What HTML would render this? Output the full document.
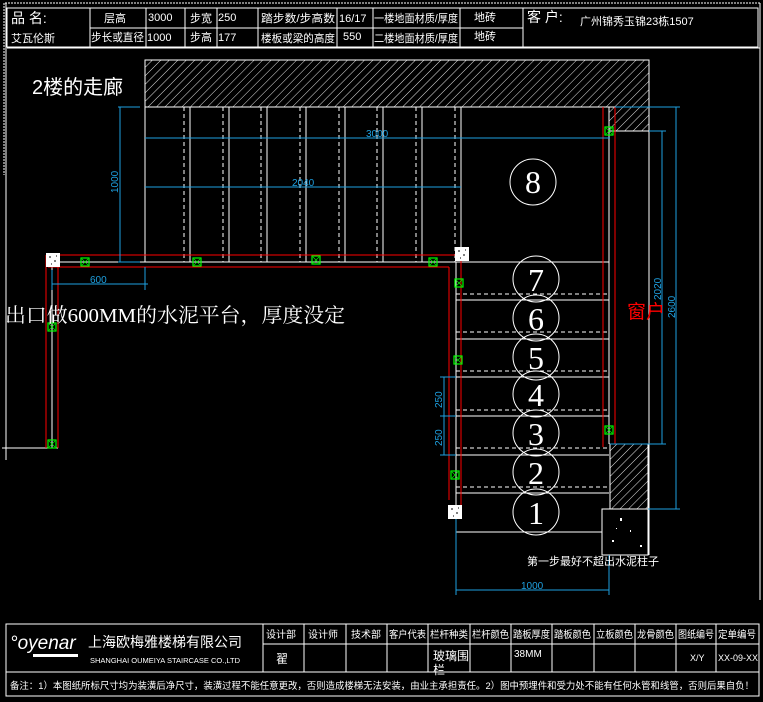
<!DOCTYPE html>
<html><head><meta charset="utf-8"><style>
html,body{margin:0;padding:0;background:#000;}
svg{display:block;}
text{font-family:"Liberation Sans","Noto Sans CJK SC",sans-serif;}
.s{font-family:"Liberation Serif","Noto Serif CJK SC",serif;}
</style></head><body>
<svg width="763" height="702" viewBox="0 0 763 702" xmlns="http://www.w3.org/2000/svg">
<defs>
<pattern id="h" width="6" height="6" patternUnits="userSpaceOnUse" patternTransform="rotate(45)">
<line x1="0" y1="0" x2="0" y2="6" stroke="#fff" stroke-width="0.9"/>
</pattern>
<g id="g"><rect x="-4" y="-4" width="8" height="8" fill="none" stroke="#0f0" stroke-width="1.2"/><path d="M-3 -3L3 3M3 -3L-3 3" stroke="#0f0" stroke-width="0.7"/></g>
<g id="w"><rect x="-7" y="-7" width="14" height="14" fill="#fff"/><path d="M-4 -3h2M1 1h2M-2 4h1M3 -4h1" stroke="#000" stroke-width="1"/></g>
</defs>
<rect width="763" height="702" fill="#000"/>
<line x1="5" y1="3" x2="760" y2="3" stroke="#fff" stroke-dasharray="2 1"/>
<line x1="6" y1="3" x2="6" y2="460" stroke="#fff"/>
<line x1="4" y1="3" x2="4" y2="175" stroke="#fff" stroke-dasharray="2 1"/>
<line x1="760" y1="3" x2="760" y2="600" stroke="#fff"/>
<g stroke="#fff" stroke-width="1" fill="none">
<rect x="7" y="8" width="751" height="39"/>
<line x1="7" y1="48" x2="760" y2="48"/>
<line x1="90" y1="28" x2="523" y2="28"/>
<line x1="90" y1="8" x2="90" y2="47"/><line x1="146" y1="8" x2="146" y2="47"/>
<line x1="185" y1="8" x2="185" y2="47"/><line x1="217" y1="8" x2="217" y2="47"/>
<line x1="258" y1="8" x2="258" y2="47"/><line x1="337" y1="8" x2="337" y2="47"/>
<line x1="373" y1="8" x2="373" y2="47"/><line x1="460" y1="8" x2="460" y2="47"/>
<line x1="523" y1="8" x2="523" y2="47"/>
</g>
<g fill="#fff" font-size="11">
<text x="11" y="23" font-size="14">品 名:</text>
<text x="11" y="42">艾瓦伦斯</text>
<text x="104" y="22">层高</text><text x="148" y="21">3000</text>
<text x="190" y="22">步宽</text><text x="218" y="21">250</text>
<text x="261" y="22" textLength="74" lengthAdjust="spacingAndGlyphs">踏步数/步高数</text><text x="339" y="22">16/17</text>
<text x="374" y="22" textLength="84" lengthAdjust="spacingAndGlyphs">一楼地面材质/厚度</text><text x="474" y="21">地砖</text>
<text x="91" y="41" textLength="53" lengthAdjust="spacingAndGlyphs">步长或直径</text><text x="147" y="41">1000</text>
<text x="190" y="41">步高</text><text x="218" y="41">177</text>
<text x="261" y="42" textLength="74" lengthAdjust="spacingAndGlyphs">楼板或梁的高度</text><text x="343" y="40">550</text>
<text x="374" y="42" textLength="84" lengthAdjust="spacingAndGlyphs">二楼地面材质/厚度</text><text x="474" y="40">地砖</text>
<text x="527" y="22" font-size="14">客 户:</text>
<text x="580" y="25">广州锦秀玉锦23栋1507</text>
</g>
<rect x="145" y="60" width="504" height="47" fill="url(#h)" stroke="#fff"/>
<rect x="609" y="107" width="40" height="24" fill="url(#h)" stroke="#fff"/>
<rect x="610" y="444" width="38" height="65" fill="url(#h)" stroke="#fff"/>
<rect x="602" y="509" width="46" height="46" fill="#000" stroke="#fff"/>
<g fill="#fff"><rect x="620" y="518" width="2" height="3"/><rect x="612" y="540" width="2" height="2"/><rect x="630" y="530" width="1" height="2"/><rect x="640" y="545" width="2" height="2"/><rect x="616" y="528" width="1" height="1"/></g>
<text x="32" y="94" fill="#fff" font-size="20">2楼的走廊</text>
<g stroke="#fff" fill="none">
<line x1="145" y1="107" x2="145" y2="262"/>
<line x1="649" y1="60" x2="649" y2="555"/>
<line x1="609" y1="107" x2="609" y2="444"/>
<line x1="48" y1="262" x2="609" y2="262"/>
<line x1="190" y1="107" x2="190" y2="262"/><line x1="229" y1="107" x2="229" y2="262"/>
<line x1="267" y1="107" x2="267" y2="262"/><line x1="306" y1="107" x2="306" y2="262"/>
<line x1="345" y1="107" x2="345" y2="262"/><line x1="383" y1="107" x2="383" y2="262"/>
<line x1="422" y1="107" x2="422" y2="262"/><line x1="461" y1="107" x2="461" y2="262"/>
<g stroke-dasharray="4 3">
<line x1="184" y1="107" x2="184" y2="262"/><line x1="223" y1="107" x2="223" y2="262"/>
<line x1="261" y1="107" x2="261" y2="262"/><line x1="300" y1="107" x2="300" y2="262"/>
<line x1="339" y1="107" x2="339" y2="262"/><line x1="377" y1="107" x2="377" y2="262"/>
<line x1="416" y1="107" x2="416" y2="262"/><line x1="455" y1="107" x2="455" y2="262"/>
</g>
<line x1="456" y1="262" x2="456" y2="590"/>
<line x1="456" y1="300" x2="609" y2="300"/><line x1="456" y1="339" x2="609" y2="339"/>
<line x1="456" y1="377" x2="609" y2="377"/><line x1="456" y1="416" x2="609" y2="416"/>
<line x1="456" y1="455" x2="609" y2="455"/><line x1="456" y1="493" x2="609" y2="493"/>
<line x1="456" y1="532" x2="602" y2="532"/>
<g stroke-dasharray="4 3">
<line x1="456" y1="294" x2="609" y2="294"/><line x1="456" y1="332" x2="609" y2="332"/>
<line x1="456" y1="371" x2="609" y2="371"/><line x1="456" y1="410" x2="609" y2="410"/>
<line x1="456" y1="448" x2="609" y2="448"/><line x1="456" y1="487" x2="609" y2="487"/>
</g>
<line x1="52" y1="262" x2="52" y2="448"/>
<line x1="2" y1="448" x2="58" y2="448"/>
</g>
<g stroke="#f00" fill="none">
<line x1="48" y1="255" x2="455" y2="255"/><line x1="48" y1="267" x2="449" y2="267"/>
<line x1="46" y1="255" x2="46" y2="448"/><line x1="58" y1="267" x2="58" y2="448"/>
<line x1="449" y1="267" x2="449" y2="500"/><line x1="461" y1="255" x2="461" y2="505"/>
<line x1="603" y1="107" x2="603" y2="447"/><line x1="615" y1="107" x2="615" y2="444"/>
</g>
<g fill="none" stroke="#fff">
<circle cx="533" cy="182" r="23"/>
<circle cx="536" cy="279" r="23"/><circle cx="536" cy="318" r="23"/><circle cx="536" cy="357" r="23"/>
<circle cx="536" cy="394" r="23"/><circle cx="536" cy="433" r="23"/><circle cx="536" cy="472" r="23"/><circle cx="536" cy="512" r="23"/>
</g>
<g fill="#fff" font-size="32" text-anchor="middle">
<text class="s" x="533" y="193">8</text>
<text class="s" x="536" y="291">7</text><text class="s" x="536" y="330">6</text><text class="s" x="536" y="369">5</text>
<text class="s" x="536" y="406">4</text><text class="s" x="536" y="445">3</text><text class="s" x="536" y="484">2</text><text class="s" x="536" y="524">1</text>
</g>
<g stroke="#1ea0e0" fill="none">
<line x1="120" y1="107" x2="120" y2="262"/><line x1="118" y1="107" x2="140" y2="107"/><line x1="118" y1="262" x2="140" y2="262"/>
<line x1="145" y1="138" x2="610" y2="138"/>
<line x1="145" y1="187" x2="461" y2="187"/>
<line x1="52" y1="284" x2="148" y2="284"/><line x1="52" y1="270" x2="52" y2="290"/><line x1="145" y1="267" x2="145" y2="290"/>
<line x1="615" y1="107" x2="680" y2="107"/><line x1="649" y1="131" x2="666" y2="131"/>
<line x1="662" y1="131" x2="662" y2="444"/><line x1="676" y1="107" x2="676" y2="509"/>
<line x1="610" y1="444" x2="666" y2="444"/><line x1="648" y1="509" x2="680" y2="509"/>
<line x1="456" y1="590" x2="609" y2="590"/><line x1="456" y1="510" x2="456" y2="595"/><line x1="609" y1="555" x2="609" y2="595"/>
<line x1="444" y1="377" x2="444" y2="455"/><line x1="440" y1="377" x2="456" y2="377"/><line x1="440" y1="416" x2="456" y2="416"/><line x1="440" y1="455" x2="456" y2="455"/>
</g>
<g fill="#1ea0e0" font-size="10">
<text x="366" y="137">3000</text>
<text x="292" y="186">2040</text>
<text x="90" y="283">600</text>
<text x="521" y="589">1000</text>
<text transform="translate(118,193) rotate(-90)">1000</text>
<text transform="translate(661,300) rotate(-90)">2020</text>
<text transform="translate(675,318) rotate(-90)">2600</text>
<text transform="translate(442,408) rotate(-90)">250</text>
<text transform="translate(442,446) rotate(-90)">250</text>
</g>
<use href="#g" x="85" y="262"/><use href="#g" x="197" y="262"/><use href="#g" x="316" y="260"/><use href="#g" x="433" y="262"/>
<use href="#g" x="609" y="131"/><use href="#g" x="459" y="283"/><use href="#g" x="458" y="360"/><use href="#g" x="609" y="430"/><use href="#g" x="455" y="475"/>
<use href="#g" x="52" y="327"/><use href="#g" x="52" y="444"/>
<use href="#w" x="53" y="260"/><use href="#w" x="462" y="254"/><use href="#w" x="455" y="512"/>
<text x="5" y="322" fill="#fff" font-size="20" class="s" textLength="340" lengthAdjust="spacingAndGlyphs">出口做600MM的水泥平台，厚度没定</text>
<text x="627" y="318" fill="#f00" font-size="19">窗户</text>
<text x="527" y="565" fill="#fff" font-size="11">第一步最好不超出水泥柱子</text>
<g stroke="#fff" fill="none">
<rect x="6" y="624" width="753" height="72"/>
<line x1="6" y1="672" x2="759" y2="672"/>
<line x1="263" y1="644" x2="759" y2="644"/>
<line x1="263" y1="624" x2="263" y2="672"/><line x1="304" y1="624" x2="304" y2="672"/>
<line x1="346" y1="624" x2="346" y2="672"/><line x1="387" y1="624" x2="387" y2="672"/>
<line x1="428" y1="624" x2="428" y2="672"/><line x1="470" y1="624" x2="470" y2="672"/>
<line x1="511" y1="624" x2="511" y2="672"/><line x1="552" y1="624" x2="552" y2="672"/>
<line x1="594" y1="624" x2="594" y2="672"/><line x1="635" y1="624" x2="635" y2="672"/>
<line x1="676" y1="624" x2="676" y2="672"/><line x1="716" y1="624" x2="716" y2="672"/>
</g>
<text x="10" y="649" fill="#fff" font-size="19" font-style="italic" font-family="Liberation Sans">°oyenar</text>
<rect x="33" y="654" width="45" height="3" fill="#fff"/>
<text x="88" y="647" fill="#fff" font-size="14">上海欧梅雅楼梯有限公司</text>
<text x="90" y="663" fill="#fff" font-size="7.5" font-family="Liberation Mono">SHANGHAI OUMEIYA STAIRCASE CO.,LTD</text>
<g fill="#fff" font-size="10">
<text x="266" y="638">设计部</text><text x="308" y="638">设计师</text><text x="351" y="638">技术部</text>
<text x="389" y="638" textLength="37" lengthAdjust="spacingAndGlyphs">客户代表</text><text x="430" y="638" textLength="38" lengthAdjust="spacingAndGlyphs">栏杆种类</text><text x="472" y="638" textLength="37" lengthAdjust="spacingAndGlyphs">栏杆颜色</text>
<text x="513" y="638" textLength="37" lengthAdjust="spacingAndGlyphs">踏板厚度</text><text x="554" y="638" textLength="37" lengthAdjust="spacingAndGlyphs">踏板颜色</text><text x="596" y="638" textLength="37" lengthAdjust="spacingAndGlyphs">立板颜色</text>
<text x="637" y="638" textLength="37" lengthAdjust="spacingAndGlyphs">龙骨颜色</text><text x="678" y="638" textLength="36" lengthAdjust="spacingAndGlyphs">图纸编号</text><text x="718" y="638" textLength="38" lengthAdjust="spacingAndGlyphs">定单编号</text>
<text x="276" y="663" font-size="12">翟</text>
<text x="433" y="660" font-size="12">玻璃围</text><text x="433" y="674" font-size="12">栏</text>
<text x="514" y="657">38MM</text>
<text x="690" y="661" font-size="9">X/Y</text><text x="718" y="661" font-size="9">XX-09-XX</text>
<text x="10" y="689" font-size="9.5" textLength="744" lengthAdjust="spacingAndGlyphs">备注：1）本图纸所标尺寸均为装潢后净尺寸，装潢过程不能任意更改，否则造成楼梯无法安装，由业主承担责任。2）图中预埋件和受力处不能有任何水管和线管，否则后果自负！</text>
</g>
</svg>
</body></html>
